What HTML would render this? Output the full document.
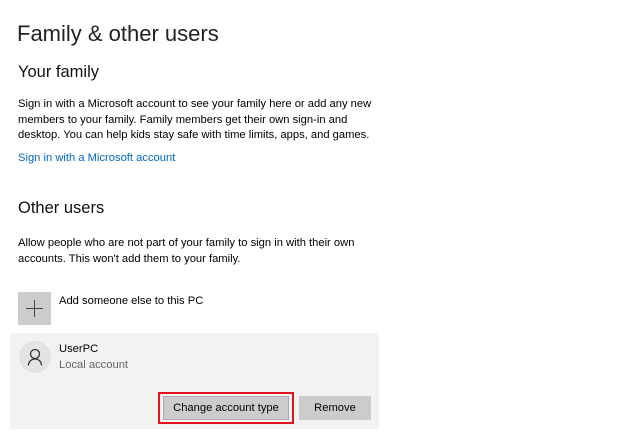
<!DOCTYPE html>
<html><head><style>
body{margin:0;width:624px;height:444px;background:#fff;font-family:"Liberation Sans",sans-serif;color:#000;position:relative;overflow:hidden}
.a{position:absolute;white-space:nowrap}
.p{font-size:11.2px;line-height:15.5px}
</style></head><body>
<div class="a" style="left:17px;top:21px;font-size:22px;color:#222">Family &amp; other users</div>
<div class="a" style="left:18px;top:63px;font-size:16.5px;color:#111">Your family</div>
<div class="a p" style="left:18px;top:97px">Sign in with a Microsoft account to see your family here or add any new<br>members to your family. Family members get their own sign-in and<br>desktop. You can help kids stay safe with time limits, apps, and games.</div>
<div class="a p" style="left:18px;top:151px;color:#0067c0">Sign in with a Microsoft account</div>
<div class="a" style="left:18px;top:199px;font-size:16.5px;color:#111">Other users</div>
<div class="a p" style="left:18px;top:236px">Allow people who are not part of your family to sign in with their own<br>accounts. This won't add them to your family.</div>
<div class="a" style="left:18px;top:292px;width:33px;height:33px;background:#ccc"></div>
<div class="a" style="left:26px;top:300px;width:17px;height:17px"><div style="position:absolute;left:8px;top:0;width:1px;height:17px;background:#444"></div><div style="position:absolute;top:8px;left:0;height:1px;width:17px;background:#444"></div></div>
<div class="a p" style="left:59px;top:294px">Add someone else to this PC</div>
<div class="a" style="left:10px;top:333px;width:369px;height:96px;background:#f2f2f2"></div>
<div class="a" style="left:19px;top:341px;width:32px;height:32px;border-radius:50%;background:#e3e3e3"></div>
<svg class="a" style="left:19px;top:341px" width="32" height="32"><circle cx="16" cy="13" r="4.5" fill="none" stroke="#333" stroke-width="1.3"/><path d="M9.5 24.5c0-4 3-6.5 6.5-6.5s6.5 2.5 6.5 6.5" fill="none" stroke="#333" stroke-width="1.3"/></svg>
<div class="a p" style="left:59px;top:342px">UserPC</div>
<div class="a p" style="left:59px;top:358px;color:#666">Local account</div>
<div class="a" style="left:158px;top:392px;width:132px;height:28px;border:2px solid #e0141e"></div>
<div class="a p" style="left:163px;top:396px;width:126px;height:24px;background:#ccc;box-sizing:border-box;border:1px solid #aaa;text-align:center;line-height:22px">Change account type</div>
<div class="a p" style="left:299px;top:396px;width:72px;height:24px;background:#ccc;text-align:center;line-height:24px">Remove</div>
</body></html>
